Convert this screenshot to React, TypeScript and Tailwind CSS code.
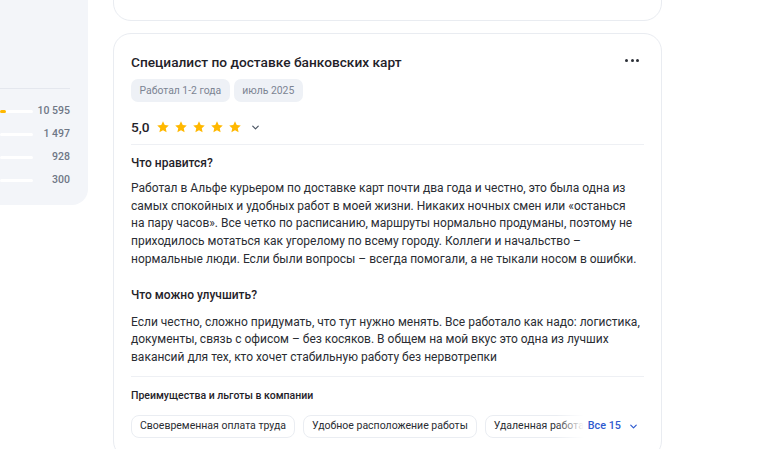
import React from "react";

const Star = () => (
  <svg width="14" height="14" viewBox="0 0 24 24" className="shrink-0">
    <path
      d="M12 2.2l2.95 6.4 6.95.75-5.15 4.75 1.4 6.9L12 17.5l-6.15 3.5 1.4-6.9L2.1 9.35l6.95-.75z"
      fill="#ffb800"
    />
  </svg>
);

const Chevron = ({ color = "#4b5563", size = 12 }: { color?: string; size?: number }) => (
  <svg width={size} height={size} viewBox="0 0 24 24" fill="none" stroke={color} strokeWidth="2.6" strokeLinecap="round" strokeLinejoin="round">
    <path d="M6 9l6 6 6-6" />
  </svg>
);

const rows = [
  { n: "10 595", fill: 6 },
  { n: "1 497", fill: 0 },
  { n: "928", fill: 0 },
  { n: "300", fill: 0 },
];

const chip =
  "h-[23px] px-[8px] flex items-center rounded-[8px] border border-[#eaedf2] text-[10.5px] text-[#2a2d33] shrink-0";

export default function App() {
  return (
    <div
      className="w-[768px] h-[449px] overflow-hidden bg-white flex items-start"
      style={{ fontFamily: "Roboto, 'Noto Sans', sans-serif" }}
    >
      <aside className="w-[88px] h-[205px] shrink-0 bg-[#f3f5f9] rounded-br-[16px] pr-[18px] pt-[88px]">
        <div className="h-px bg-[#e4e7ee]" />
        <div className="flex flex-col gap-[9px] mt-[15px]">
          {rows.map((r) => (
            <div key={r.n} className="flex items-center h-[14px]">
              <div className="relative w-[33px] h-[3px] bg-white rounded-full">
                {r.fill > 0 && (
                  <div className="absolute left-0 top-0 h-[3px] bg-[#ffb800] rounded-full" style={{ width: r.fill }} />
                )}
              </div>
              <div className="flex-1 text-right whitespace-nowrap text-[10.5px] font-medium text-[#6f7786] leading-[14px]">
                {r.n}
              </div>
            </div>
          ))}
        </div>
      </aside>

      <main className="ml-[25px] w-[549px] shrink-0 flex flex-col gap-[12px]">
        <div className="h-[100px] -mt-[79px] border border-[#e9ecf1] rounded-[18px] bg-white" />

        <section className="border border-[#e9ecf1] rounded-[18px] bg-white px-[17px] pt-[18px] pb-[20px] text-[#1f2229]">
          <div className="flex items-center justify-between h-[20px]">
            <h2 className="text-[13.7px] font-medium leading-[20px] text-[#1f2229]">
              Специалист по доставке банковских карт
            </h2>
            <div className="flex gap-[2.5px] mr-[5px] -mt-[3px]">
              <span className="w-[3px] h-[3px] rounded-full bg-[#2b2f36]" />
              <span className="w-[3px] h-[3px] rounded-full bg-[#2b2f36]" />
              <span className="w-[3px] h-[3px] rounded-full bg-[#2b2f36]" />
            </div>
          </div>

          <div className="flex gap-[4px] mt-[7px]">
            <span className="h-[23px] px-[8.5px] flex items-center rounded-[7px] bg-[#eef1f6] text-[10.4px] text-[#7c8493]">
              Работал 1-2 года
            </span>
            <span className="h-[23px] px-[8.5px] flex items-center rounded-[7px] bg-[#eef1f6] text-[10.4px] text-[#7c8493]">
              июль 2025
            </span>
          </div>

          <div className="flex items-center h-[20px] mt-[15px]">
            <span className="text-[13.7px] font-medium leading-[20px] mr-[6px]">5,0</span>
            <div className="flex gap-[4px]">
              <Star />
              <Star />
              <Star />
              <Star />
              <Star />
            </div>
            <span className="ml-[8px] mt-[1px]">
              <Chevron size={11} />
            </span>
          </div>

          <div className="h-px bg-[#eef0f4] mt-[7px]" />

          <h3 className="mt-[9px] text-[12px] font-medium leading-[18px]">Что нравится?</h3>
          <p className="mt-[8px] w-[507px] text-[12px] leading-[17.7px] text-[#2a2d33]">
            Работал в Альфе курьером по доставке карт почти два года и честно, это была одна из самых спокойных и удобных
            работ в моей жизни. Никаких ночных смен или «останься на пару часов». Все четко по расписанию, маршруты
            нормально продуманы, поэтому не приходилось мотаться как угорелому по всему городу. Коллеги и начальство –
            нормальные люди. Если были вопросы – всегда помогали, а не тыкали носом в ошибки.
          </p>

          <h3 className="mt-[17px] text-[12px] font-medium leading-[18px]">Что можно улучшить?</h3>
          <p className="mt-[10px] w-[511px] text-[12px] leading-[17.7px] text-[#2a2d33]">
            Если честно, сложно придумать, что тут нужно менять. Все работало как надо: логистика, документы, связь с
            офисом – без косяков. В общем на мой вкус это одна из лучших вакансий для тех, кто хочет стабильную работу без
            нервотрепки
          </p>

          <div className="h-px bg-[#eef0f4] mt-[9px]" />

          <h4 className="mt-[11px] text-[10.5px] font-medium leading-[16px]">Преимущества и льготы в компании</h4>

          <div className="relative mt-[11px] h-[23px] overflow-hidden">
            <div className="flex gap-[8px] whitespace-nowrap">
              <span className={chip}>Своевременная оплата труда</span>
              <span className={chip}>Удобное расположение работы</span>
              <span className={chip}>Удаленная работа</span>
            </div>
            <div className="absolute right-0 top-0 h-[23px] flex items-center">
              <div className="w-[28px] h-[23px] bg-gradient-to-r from-white/0 to-white" />
              <div className="h-[23px] bg-white flex items-center gap-[7px] pl-[4px] pr-[5px]">
                <span className="text-[10.8px] font-medium text-[#2f5bcf]">Все 15</span>
                <Chevron color="#2f5bcf" size={11} />
              </div>
            </div>
          </div>
        </section>
      </main>
    </div>
  );
}
